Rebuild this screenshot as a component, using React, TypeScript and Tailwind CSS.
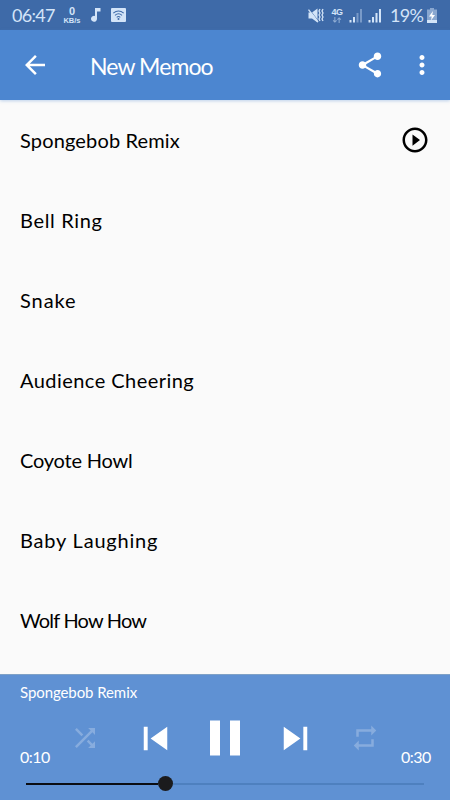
import React from 'react';

const PLAY_CIRCLE =
  'M10 16.5l6-4.5-6-4.5v9zM12 2C6.48 2 2 6.48 2 12s4.48 10 10 10 10-4.48 10-10S17.52 2 12 2zm0 18c-4.41 0-8-3.59-8-8s3.59-8 8-8 8 3.59 8 8-3.59 8-8 8z';
const BACK = 'M20 11H7.83l5.59-5.59L12 4l-8 8 8 8 1.41-1.41L7.83 13H20v-2z';
const SHARE =
  'M18 16.08c-.76 0-1.44.3-1.96.77L8.91 12.7c.05-.23.09-.46.09-.7s-.04-.47-.09-.7l7.05-4.11c.54.5 1.25.81 2.04.81 1.66 0 3-1.34 3-3s-1.34-3-3-3-3 1.34-3 3c0 .24.04.47.09.7L8.04 9.81C7.5 9.31 6.79 9 6 9c-1.66 0-3 1.34-3 3s1.34 3 3 3c.79 0 1.5-.31 2.04-.81l7.12 4.16c-.05.21-.08.43-.08.65 0 1.61 1.31 2.92 2.92 2.92s2.92-1.31 2.92-2.92-1.31-2.92-2.92-2.92z';
const MORE =
  'M12 8c1.1 0 2-.9 2-2s-.9-2-2-2-2 .9-2 2 .9 2 2 2zm0 2c-1.1 0-2 .9-2 2s.9 2 2 2 2-.9 2-2-.9-2-2-2zm0 6c-1.1 0-2 .9-2 2s.9 2 2 2 2-.9 2-2-.9-2-2-2z';
const SHUFFLE =
  'M10.59 9.17L5.41 4 4 5.41l5.17 5.17 1.42-1.41zM14.5 4l2.04 2.04L4 18.59 5.41 20 17.96 7.46 20 9.5V4h-5.5zm.33 9.41l-1.41 1.41 3.13 3.13L14.5 20H20v-5.5l-2.04 2.04-3.13-3.13z';
const REPEAT = 'M7 7h10v3l4-4-4-4v3H5v6h2V7zm10 10H7v-3l-4 4 4 4v-3h12v-6h-2v4z';

function Icon({ d, className }: { d: string; className: string }) {
  return (
    <svg viewBox="0 0 24 24" fill="currentColor" className={`shrink-0 ${className}`}>
      <path d={d} />
    </svg>
  );
}

function Signal({ dim }: { dim: boolean }) {
  return (
    <svg viewBox="0 0 14 15" fill="currentColor" className="h-[15px] w-[14px]">
      <rect x="0.5" y="12" width="2" height="2.5" />
      <rect x="4" y="9" width="2" height="5.5" />
      <rect x="7.5" y="5" width="2" height="9.5" opacity={dim ? 0.4 : 1} />
      <rect x="11" y="1" width="2" height="13.5" opacity={dim ? 0.4 : 1} />
    </svg>
  );
}

const songs = [
  { name: 'Spongebob Remix', tracking: 'tracking-[0.15px]' },
  { name: 'Bell Ring', tracking: 'tracking-[0.65px]' },
  { name: 'Snake', tracking: 'tracking-[0.95px]' },
  { name: 'Audience Cheering', tracking: 'tracking-[0.45px]' },
  { name: 'Coyote Howl', tracking: 'tracking-[-0.2px]' },
  { name: 'Baby Laughing', tracking: 'tracking-[0.8px]' },
  { name: 'Wolf How How', tracking: 'tracking-[-0.8px]' },
];

export default function App() {
  return (
    <div className="flex h-[800px] w-[450px] flex-col overflow-hidden bg-[#fafafa] font-['Lato',sans-serif] whitespace-nowrap">
      <div className="flex h-[30px] shrink-0 items-center bg-[#3e6aa8] pl-3 text-[#d3e4f8]">
        <span className="w-[51px] text-[18px] leading-5 tracking-[-0.7px]">06:47</span>
        <div className="flex w-[18px] flex-col items-center pt-px font-['Liberation_Sans',sans-serif] font-bold">
          <span className="text-[11px] leading-[10px]">0</span>
          <span className="text-[7.5px] leading-[9px]">KB/s</span>
        </div>
        <svg viewBox="0 0 10 14" fill="currentColor" className="ml-[10px] h-[14px] w-[10px]">
          <path d="M4 0h5.5v3.5H6v7.2A3 3 0 1 1 4 8z" />
        </svg>
        <svg viewBox="0 0 16 14" className="ml-[10px] h-[14px] w-4">
          <rect width="15" height="14" rx="1" fill="currentColor" />
          <g fill="none" stroke="#3e6aa8" strokeWidth="1.1">
            <path d="M2.3 5.2Q7.5 .9 12.7 5.2M4 7.3Q7.5 4.3 11 7.3M5.7 9.3Q7.5 7.8 9.3 9.3" />
          </g>
          <circle cx="7.5" cy="11" r="1" fill="#3e6aa8" />
        </svg>
        <svg viewBox="0 0 16 15" className="ml-[181px] h-[15px] w-4">
          <path d="M.5 4.5H4L9.5 .5v14L4 10.5H.5z" fill="currentColor" />
          <path d="M1.2 1l9.5 12.5" stroke="#3e6aa8" strokeWidth="0.7" />
          <path d="M.5 1.6l9.5 12.4" stroke="currentColor" strokeWidth="1.3" />
          <path d="M12 1l-1 2 1 2-1 2 1 2-1 2 1 2M15 1l-1 2 1 2-1 2 1 2-1 2 1 2" fill="none" stroke="currentColor" strokeWidth="1.3" />
        </svg>
        <div className="ml-[7px] flex w-3 flex-col items-center font-['Liberation_Sans',sans-serif]">
          <span className="text-[9px] leading-[9px] font-bold tracking-[-0.4px]">4G</span>
          <svg viewBox="0 0 10 7" className="h-[6px] w-[10px] opacity-55" fill="none" stroke="currentColor" strokeWidth="1.2">
            <path d="M2.5 0v6M.5 4l2 2 2-2M7.5 7V1M5.5 3l2-2 2 2" />
          </svg>
        </div>
        <div className="ml-[6px] flex gap-[5px] pt-px">
          <Signal dim />
          <Signal dim={false} />
        </div>
        <span className="ml-2 w-[37px] text-[18px] leading-5 tracking-[-0.7px]">19%</span>
        <svg viewBox="0 0 10 15" className="h-[15px] w-[10px]">
          <path d="M3 0h4v1.5h3V15H0V1.5h3z" fill="currentColor" opacity=".5" />
          <path d="M0 12h10v3H0z" fill="currentColor" />
          <path d="M6 3L2 8.5h2.7L4 12.5 8 7H5.3z" fill="#fff" />
        </svg>
      </div>

      <header className="z-10 flex h-[70px] shrink-0 items-center bg-[#4c86d0] pl-5 text-white shadow-[0_1px_3px_rgba(76,134,208,0.35)]">
        <Icon d={BACK} className="size-[30px]" />
        <h1 className="ml-10 flex-1 pt-[2px] text-[23px] leading-8 tracking-[-0.9px]">New Memoo</h1>
        <Icon d={SHARE} className="size-[30px]" />
        <Icon d={MORE} className="mr-[13px] ml-[22px] size-[30px]" />
      </header>

      <main className="h-[574px] shrink-0 overflow-hidden text-black">
        {songs.map((song, i) => (
          <div key={song.name} className="flex h-20 items-center justify-between px-5">
            <span className={`text-[20px] leading-7 ${song.tracking}`}>{song.name}</span>
            {i === 0 && <Icon d={PLAY_CIRCLE} className="size-[30px]" />}
          </div>
        ))}
      </main>

      <footer className="flex h-[126px] shrink-0 flex-col border-t border-[#7fa1c6] bg-[#5f91d3] text-white">
        <div className="h-[33px] pt-[7px] pl-5 text-[15px] leading-5 tracking-[-0.08px]">Spongebob Remix</div>
        <div className="flex h-[60px] items-end">
          <span className="w-[50px] pb-[1px] pl-5 text-[16px] leading-5 tracking-[-0.5px]">0:10</span>
          <div className="grid h-[60px] w-[350px] grid-cols-5 place-items-center pb-px">
            <Icon d={SHUFFLE} className="size-[30px] text-white/25" />
            <Icon d="M6 6h2v12H6zm3.5 6l8.5 6V6z" className="size-[47px]" />
            <Icon d="M6 19h4V5H6v14zm8-14v14h4V5h-4z" className="size-[60px]" />
            <Icon d="M6 18l8.5-6L6 6v12zM16 6v12h2V6h-2z" className="size-[47px]" />
            <Icon d={REPEAT} className="size-[30px] text-white/25" />
          </div>
          <span className="w-[50px] pb-[1px] pl-px text-[16px] leading-5 tracking-[-0.5px]">0:30</span>
        </div>
        <div className="flex h-[31px] items-center px-[26px]">
          <div className="h-[2px] w-[132px] bg-[#0b0d12]" />
          <div className="size-[15px] rounded-full bg-[#1b1b1d]" />
          <div className="h-[2px] flex-1 bg-[#4e80bf]" />
        </div>
      </footer>
    </div>
  );
}
